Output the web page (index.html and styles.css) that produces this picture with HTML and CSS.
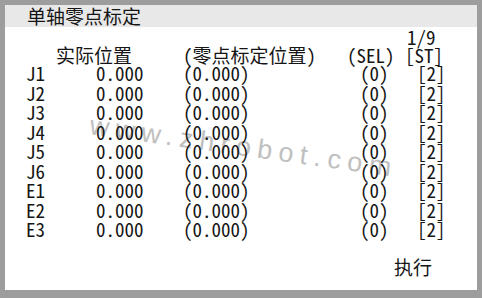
FILE: index.html
```html
<!DOCTYPE html>
<html lang="zh-CN">
<head>
<meta charset="utf-8">
<title>单轴零点标定</title>
<link rel="stylesheet" href="styles.css">
</head>
<body>
<div class="screen">
  <div class="panel">
    <div class="watermark">www.zhrobot.com</div>
    <div class="titlebar">单轴零点标定</div>
    <div class="page">1/9</div>
    <div class="grid">
      <div class="hd-pos">实际位置</div>
      <div class="hd-zero">(零点标定位置)</div>
      <div class="hd-sel">(SEL)</div>
      <div class="hd-st">[ST]</div>

      <div>J1</div><div>0.000</div><div>(0.000)</div><div class="sel">(0)</div><div class="st">[2]</div>
      <div>J2</div><div>0.000</div><div>(0.000)</div><div class="sel">(0)</div><div class="st">[2]</div>
      <div>J3</div><div>0.000</div><div>(0.000)</div><div class="sel">(0)</div><div class="st">[2]</div>
      <div>J4</div><div>0.000</div><div>(0.000)</div><div class="sel">(0)</div><div class="st">[2]</div>
      <div>J5</div><div>0.000</div><div>(0.000)</div><div class="sel">(0)</div><div class="st">[2]</div>
      <div>J6</div><div>0.000</div><div>(0.000)</div><div class="sel">(0)</div><div class="st">[2]</div>
      <div>E1</div><div>0.000</div><div>(0.000)</div><div class="sel">(0)</div><div class="st">[2]</div>
      <div>E2</div><div>0.000</div><div>(0.000)</div><div class="sel">(0)</div><div class="st">[2]</div>
      <div>E3</div><div>0.000</div><div>(0.000)</div><div class="sel">(0)</div><div class="st">[2]</div>
    </div>
    <div class="footer">执行</div>
  </div>
</div>
</body>
</html>
```

FILE: styles.css
```css
html, body {
  margin: 0;
  padding: 0;
}

body {
  width: 482px;
  height: 298px;
  overflow: hidden;
  background: #9d9d9d;
}

.screen {
  width: 482px;
  height: 298px;
  padding: 5px 5px 8px 5px;
  box-sizing: border-box;
}

.panel {
  position: relative;
  isolation: isolate;
  width: 472px;
  height: 285px;
  background: #ffffff;
  display: flex;
  flex-direction: column;
  color: #151515;
  font-family: "Noto Sans Mono CJK SC", "Noto Sans CJK SC", monospace;
  font-size: 19px;
}

.watermark {
  position: absolute;
  z-index: -1;
  left: 85px;
  top: 105px;
  transform: rotate(8deg);
  transform-origin: left center;
  font-family: "Liberation Sans", sans-serif;
  font-size: 27px;
  letter-spacing: 6.5px;
  color: #c0c0c0;
  white-space: nowrap;
}

.titlebar {
  line-height: 22px;
  padding-left: 22px;
  background: #e8e8e8;
}

.page {
  padding-top: 1px;
  line-height: 17px;
  padding-left: 402px;
}

.grid {
  margin-top: 1px;
  padding-left: 21px;
  display: grid;
  grid-template-columns: 70px 87px 164px 58px auto;
  grid-template-rows: 17px;
  grid-auto-rows: 19.5px;
  line-height: 17px;
  white-space: nowrap;
}

.grid > div {
  display: flex;
  align-items: center;
}

.hd-pos {
  grid-column: 1 / 3;
  padding-left: 30px;
}

.sel {
  padding-left: 13px;
}

.st {
  padding-left: 12px;
}

.footer {
  margin-top: auto;
  line-height: 20px;
  padding-left: 389px;
  padding-bottom: 13px;
}
```
